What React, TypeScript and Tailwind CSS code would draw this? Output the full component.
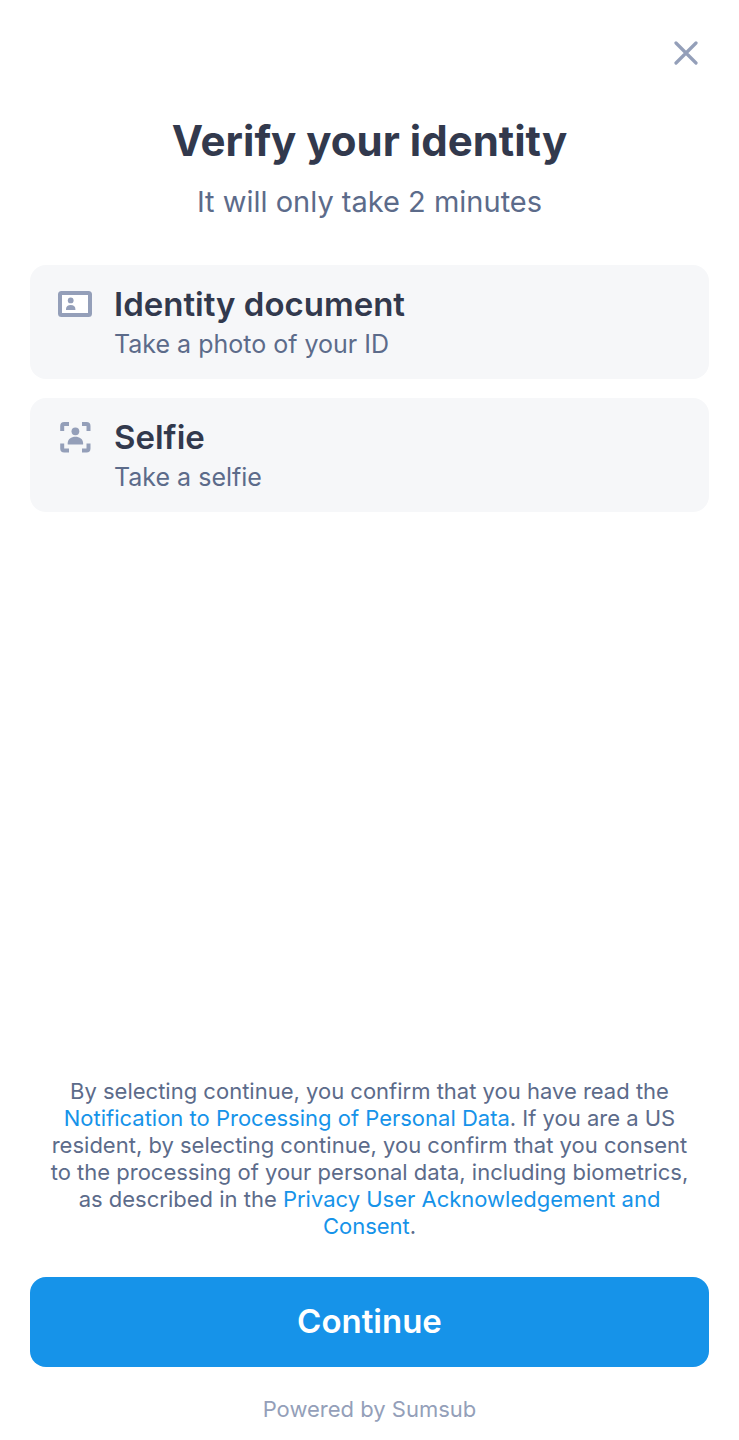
export default function App() {
  return (
    <main className="flex min-h-screen flex-col bg-white px-[30px] pt-[30px] pb-[13px] font-['Inter',sans-serif] text-[#5c6b8a]">
      <header className="flex justify-end">
        <button type="button" aria-label="Close" className="flex size-[46px] items-center justify-center text-[#949fb9]">
          <svg viewBox="0 0 24 24" className="size-6" fill="none" stroke="currentColor" strokeWidth="3.2" strokeLinecap="round">
            <path d="M2 2L22 22M22 2L2 22" />
          </svg>
        </button>
      </header>
      <h1 className="mt-[35px] text-center text-[42px] leading-[60px] font-bold text-[#32394d]">Verify your identity</h1>
      <p className="mt-[11px] text-center text-[29px] leading-10">It will only take 2 minutes</p>
      <ul className="mt-[43px] flex flex-col gap-[19px]">
        <li className="flex gap-5 rounded-2xl bg-[#f6f7f9] px-7 py-[17px]">
          <svg viewBox="0 0 36 36" className="mt-1 size-9 text-[#949fb9]" fill="none" aria-hidden="true">
            <rect x="2" y="7" width="30" height="22" rx="1.5" fill="white" stroke="currentColor" strokeWidth="4" />
            <circle cx="12.7" cy="14.4" r="2.9" fill="currentColor" />
            <path d="M8 24v-1c0-2.4 2-4 4.7-4s4.7 1.6 4.7 4v1z" fill="currentColor" />
          </svg>
          <div>
            <h2 className="text-[33px] leading-[44px] font-semibold text-[#32394d]">Identity document</h2>
            <p className="text-[25px] leading-9">Take a photo of your ID</p>
          </div>
        </li>
        <li className="flex gap-5 rounded-2xl bg-[#f6f7f9] px-7 py-[17px]">
          <svg viewBox="0 0 36 36" className="mt-1 size-9 text-[#949fb9]" fill="none" aria-hidden="true">
            <path
              d="M4.2 12V7a2 2 0 0 1 2-2H11M24 5h4.5a2 2 0 0 1 2 2v5M30.5 24.5v5a2 2 0 0 1-2 2H24M11 31.5H6.2a2 2 0 0 1-2-2v-5"
              stroke="currentColor"
              strokeWidth="4"
            />
            <circle cx="17.4" cy="12.3" r="3.9" fill="currentColor" />
            <path d="M9.7 25.4v-1.2c0-4 3.6-6.4 7.7-6.4s7.7 2.4 7.7 6.4v1.2z" fill="currentColor" />
          </svg>
          <div>
            <h2 className="text-[33px] leading-[44px] font-semibold text-[#32394d]">Selfie</h2>
            <p className="text-[25px] leading-9">Take a selfie</p>
          </div>
        </li>
      </ul>
      <footer className="mt-auto flex flex-col">
        <p className="px-4 text-center text-[22px] leading-[27px]">
          By selecting continue, you confirm that you have read the{" "}
          <a href="#data" className="text-[#1693e9]">Notification to Processing of Personal Data</a>. If you are a US resident, by selecting continue, you confirm that you consent to the processing of your personal data, including biometrics, as described in the{" "}
          <a href="#privacy" className="text-[#1693e9]">Privacy User Acknowledgement and Consent</a>.
        </p>
        <button type="button" className="mt-[37px] h-[90px] rounded-2xl bg-[#1693e9] text-[33px] font-semibold text-white">Continue</button>
        <p className="mt-6 text-center text-[22px] leading-9 text-[#949fb9]">Powered by Sumsub</p>
      </footer>
    </main>
  );
}
